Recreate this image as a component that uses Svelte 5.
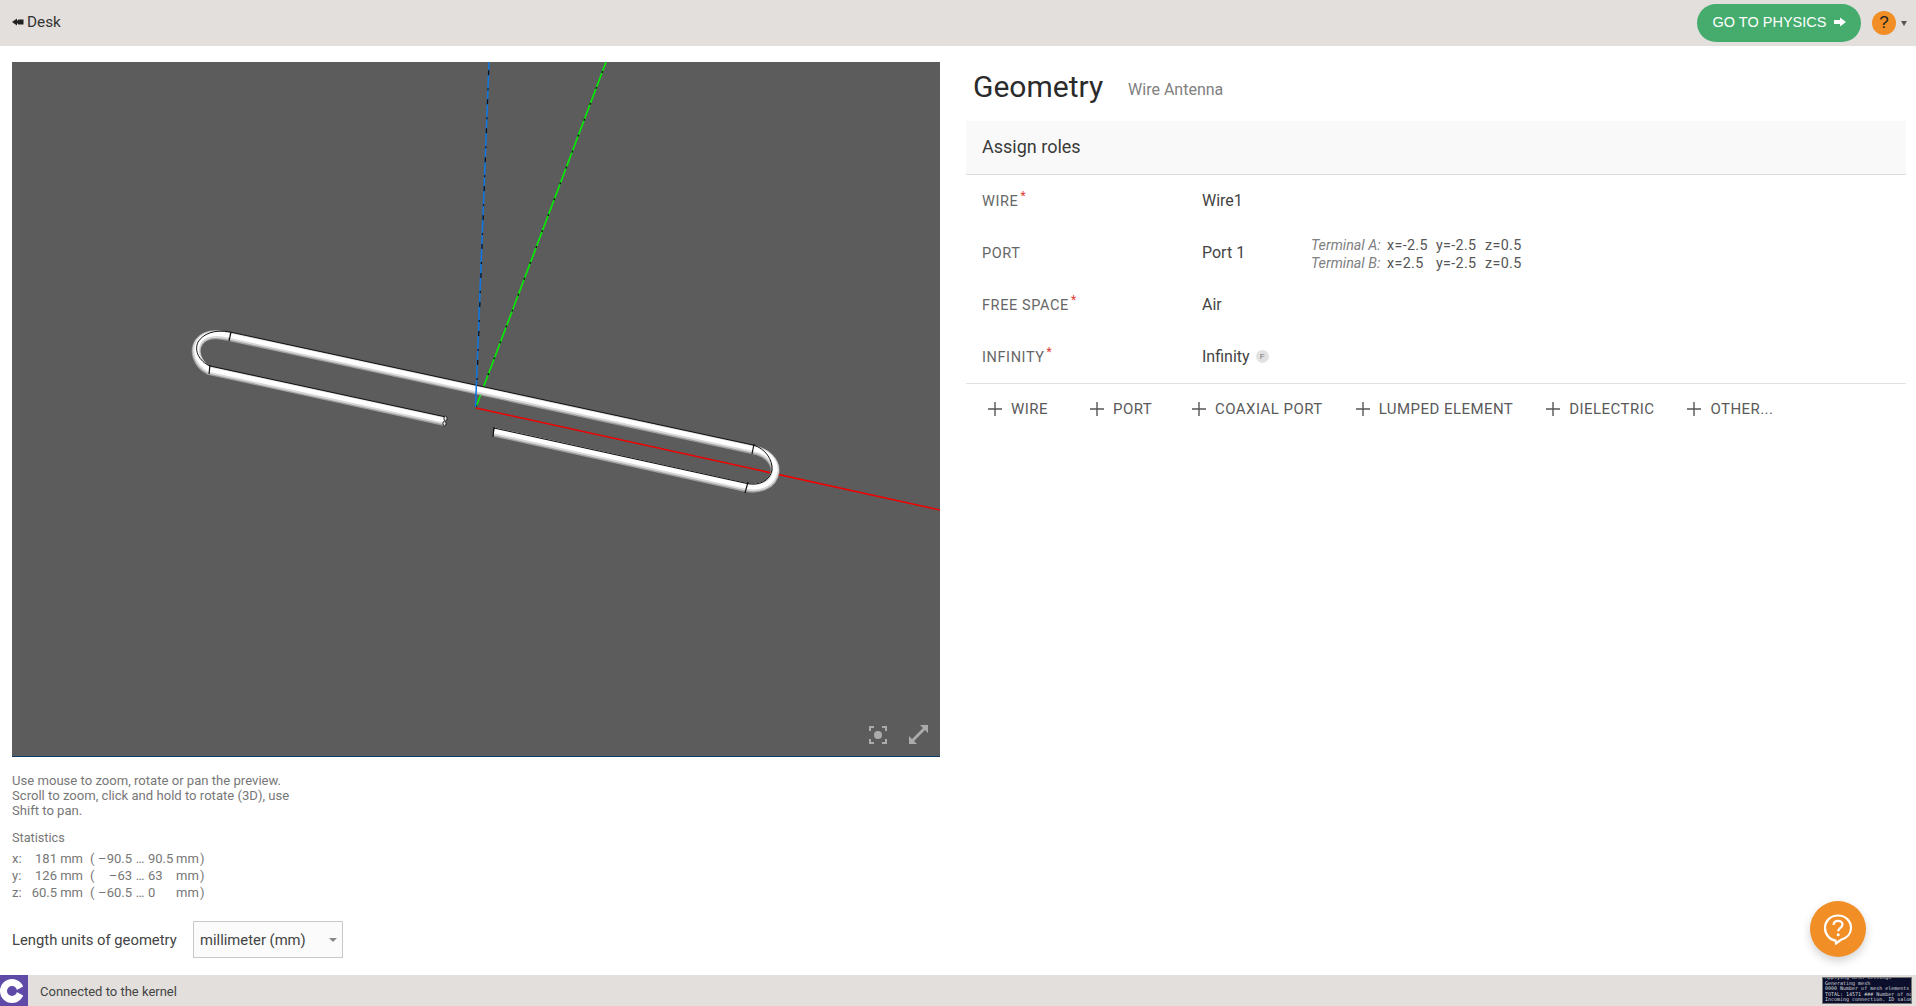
<script>
  const roles = [
    { label: "WIRE", required: true, value: "Wire1" },
    { label: "PORT", value: "Port 1", terminals: true },
    { label: "FREE SPACE", required: true, value: "Air" },
    { label: "INFINITY", required: true, value: "Infinity", badge: "F" }
  ];
  const terminals = [
    ["Terminal A:", "x=-2.5", "y=-2.5", "z=0.5"],
    ["Terminal B:", "x=2.5", "y=-2.5", "z=0.5"]
  ];
  const actions = ["WIRE", "PORT", "COAXIAL PORT", "LUMPED ELEMENT", "DIELECTRIC", "OTHER..."];
  const stats = [
    ["x:", "181 mm", "(", "–90.5", "…", "90.5", "mm", ")"],
    ["y:", "126 mm", "(", "–63", "…", "63", "mm", ")"],
    ["z:", "60.5 mm", "(", "–60.5", "…", "0", "mm", ")"]
  ];
  const logLines = [
    "Applying mesh settings",
    "Generating mesh",
    "0000 Number of mesh elements",
    "TOTAL: 14571 ### Number of no",
    "Incoming connection. ID salom"
  ];

  // wire centre lines, in page coordinates (the svg viewBox starts at 12,62)
  const tubes = [
    "M229 336.5 C216 333.5 205 334 199 342 C193 351 197 364 209 370.5 L445 421.5",
    "M494 432 L746 487.5 C760 490 773 485 775 472 C776 462 767 452 752 449.5 L229 336.5"
  ];
  const edges = [
    "M230 332 L753 445",
    "M230 332 C214 329 203 334 198 342 C194 351 199 361 210 366 L446 417",
    "M494 428 L747 483.5 C759 486 770 481 772 470 C773 460 765 448 753 445"
  ];
  const cuts = [
    [231, 332, 229, 341], [210, 365, 209, 374], [754, 444, 752, 454], [748, 482, 745, 493], [494, 427, 493, 437]
  ];
</script>

<div class="page">
  <header class="topbar">
    <a class="back" href="#desk">
      <svg width="12" height="8" viewBox="0 0 12 8"><path d="M0 4 L5 0.5 V3 L6.5 1.5 H11.5 V6.5 H6.5 L5 5 V7.5 Z" fill="#222" /></svg>
      <span>Desk</span>
    </a>
    <div class="top-actions">
      <button class="physics">
        <span>GO TO PHYSICS</span>
        <svg width="12" height="10" viewBox="0 0 12 10"><path d="M0 3 H6 V0.5 L12 5 L6 9.5 V7 H0 Z" fill="#fff" /></svg>
      </button>
      <span class="help">?</span>
      <span class="caret"></span>
    </div>
  </header>

  <main class="main">
    <section class="left">
      <div class="viewport">
        <svg class="scene" viewBox="12 62 928 694">
          <line x1="476" y1="407" x2="606" y2="62" stroke="#00f000" stroke-width="1.6" />
          <line x1="476" y1="407" x2="606" y2="62" stroke="#111" stroke-width="1.4" stroke-dasharray="2 15" />
          <line x1="476" y1="408" x2="940" y2="510" stroke="#f00000" stroke-width="1.5" />
          {#each tubes as d}
            <path {d} fill="none" stroke="#a0a0a0" stroke-width="9" />
            <path {d} fill="none" stroke="#d8d8d8" stroke-width="7.5" transform="translate(0.2 -0.6)" />
            <path {d} fill="none" stroke="#ffffff" stroke-width="4.5" transform="translate(0.3 -1)" />
          {/each}
          {#each edges as d}
            <path {d} fill="none" stroke="#111" stroke-width="1" />
          {/each}
          {#each cuts as c}
            <line x1={c[0]} y1={c[1]} x2={c[2]} y2={c[3]} stroke="#111" stroke-width="1.2" />
          {/each}
          <ellipse cx="445.5" cy="418.5" rx="1.6" ry="2.4" fill="#ddd" stroke="#111" stroke-width="0.9" />
          <ellipse cx="444.5" cy="423.5" rx="1.6" ry="2.4" fill="#ddd" stroke="#111" stroke-width="0.9" />
          <line x1="475.5" y1="407" x2="489" y2="62" stroke="#0a78e6" stroke-width="1.5" />
          <line x1="477" y1="380" x2="489" y2="62" stroke="#111" stroke-width="1.3" stroke-dasharray="2 13 5 9" />
        </svg>
        <div class="view-tools">
          <svg width="18" height="18" viewBox="0 0 18 18" fill="none" stroke="#ababab" stroke-width="2">
            <path d="M1 5 V1 H5 M13 1 H17 V5 M17 13 V17 H13 M5 17 H1 V13" />
            <circle cx="9" cy="9" r="4" fill="#ababab" stroke="none" />
          </svg>
          <svg width="19" height="19" viewBox="0 0 19 19" fill="#ababab">
            <path d="M19 0 V8 L16 5 L5 16 L8 19 H0 V11 L3 14 L14 3 L11 0 Z" />
          </svg>
        </div>
      </div>

      <p class="hint">Use mouse to zoom, rotate or pan the preview.<br />Scroll to zoom, click and hold to rotate (3D), use<br />Shift to pan.</p>

      <h4 class="stats-title">Statistics</h4>
      <div class="stats">
        {#each stats as row}
          <span class="axis">{row[0]}</span>
          <span class="size">{row[1]}</span>
          <span class="open">{row[2]}</span>
          <span class="size">{row[3]}</span>
          <span class="dots">{row[4]}</span>
          <span>{row[5]}</span>
          <span>{row[6]}</span>
          <span>{row[7]}</span>
        {/each}
      </div>

      <div class="units">
        <label for="units">Length units of geometry</label>
        <div class="select" id="units">
          <span>millimeter (mm)</span>
          <span class="select-arrow"></span>
        </div>
      </div>
    </section>

    <section class="right">
      <div class="title-row">
        <h1>Geometry</h1>
        <span class="subtitle">Wire Antenna</span>
      </div>
      <h2 class="panel-head">Assign roles</h2>
      <div class="roles">
        {#each roles as role}
          <div class="role">
            <span class="role-label">{role.label}{#if role.required}<sup>*</sup>{/if}</span>
            <span class="role-value">
              {role.value}
              {#if role.badge}<i class="badge">{role.badge}</i>{/if}
            </span>
            {#if role.terminals}
              <div class="terminals">
                {#each terminals as t}
                  <em>{t[0]}</em><span>{t[1]}</span><span>{t[2]}</span><span>{t[3]}</span>
                {/each}
              </div>
            {/if}
          </div>
        {/each}
      </div>
      <div class="add-row">
        {#each actions as action}
          <button class="add">
            <svg width="14" height="14" viewBox="0 0 14 14"><path d="M7 0 V14 M0 7 H14" stroke="#555" stroke-width="1.4" /></svg>
            {action}
          </button>
        {/each}
      </div>
    </section>
  </main>

  <button class="fab" aria-label="Help">
    <svg width="30" height="32" viewBox="0 0 30 32" fill="none" stroke="#fff" stroke-width="2.2">
      <path d="M15 2.5 C7.5 2.5 2 8 2 15 C2 22 7.5 27 12.5 27.5 L13 30.5 L18 26.8 C24 25 28 20.5 28 15 C28 8 22.5 2.5 15 2.5 Z" />
      <path d="M10.5 11.8 C10.8 9 12.8 7.8 15 7.8 C17.5 7.8 19.5 9.3 19.5 11.6 C19.5 14.8 15.2 15 15.2 18.2" />
      <circle cx="15.2" cy="21.8" r="1.5" fill="#fff" stroke="none" />
    </svg>
  </button>

  <footer class="statusbar">
    <div class="logo">
      <svg width="28" height="31" viewBox="0 0 28 31" fill="none">
        <circle cx="12" cy="16" r="8.5" stroke="#fff" stroke-width="7" />
        <path d="M15 16 L30 7.5 V24.5 Z" fill="#5f4aa8" />
      </svg>
    </div>
    <span class="status-text">Connected to the kernel</span>
    <div class="log">
      {#each logLines as line}
        <div>{line}</div>
      {/each}
    </div>
  </footer>
</div>

<style>
  :global(body) {
    margin: 0;
    background: #fff;
    font-family: Roboto, "Liberation Sans", sans-serif;
    color: #333;
  }
  .page {
    height: 100vh;
    display: flex;
    flex-direction: column;
    overflow: hidden;
    position: relative;
  }
  .topbar {
    height: 46px;
    flex: none;
    background: #e2dfdc;
    display: flex;
    align-items: center;
    justify-content: space-between;
    padding: 0 9px 0 12px;
  }
  .back {
    display: flex;
    align-items: center;
    gap: 3px;
    margin-top: -2px;
    color: #333;
    font-size: 15.3px;
    text-decoration: none;
  }
  .top-actions {
    display: flex;
    align-items: center;
  }
  .physics {
    width: 164px;
    height: 38px;
    border: 0;
    border-radius: 19px;
    background: #45ac6d;
    color: #fff;
    font-family: "Liberation Sans", Arial, sans-serif;
    font-size: 14.5px;
    display: flex;
    align-items: center;
    justify-content: center;
    gap: 8px;
    padding: 0 0 2px 1px;
  }
  .help {
    width: 24px;
    height: 24px;
    margin-left: 11px;
    border-radius: 50%;
    background: #f18e26;
    color: #222;
    font: 17px/24px "Liberation Sans", sans-serif;
    text-align: center;
  }
  .caret {
    margin-left: 5px;
    border-left: 3px solid transparent;
    border-right: 3px solid transparent;
    border-top: 5px solid #555;
  }
  .main {
    flex: 1;
    display: flex;
    min-height: 0;
  }
  .left {
    width: 928px;
    padding: 16px 0 0 12px;
    font-size: 12.7px;
    color: #777;
  }
  .viewport {
    height: 694px;
    background: #5c5c5c;
    border-bottom: 1px solid #0a3a6a;
    box-sizing: content-box;
    position: relative;
    margin-bottom: 16px;
  }
  .scene {
    display: block;
    width: 100%;
    height: 100%;
  }
  .view-tools {
    position: absolute;
    right: 12px;
    bottom: 12px;
    display: flex;
    align-items: center;
    gap: 22px;
  }
  .hint {
    margin: 0;
    font-size: 13.1px;
    line-height: 15px;
    width: 310px;
  }
  .stats-title {
    margin: 12px 0 5px;
    font-weight: 400;
    font-size: 12.7px;
    line-height: 15px;
  }
  .stats {
    display: grid;
    grid-template-columns: 18px 53px 12px 37px 16px 28px 24px auto;
    justify-content: start;
    line-height: 17px;
    font-size: 13px;
  }
  .size {
    text-align: right;
  }
  .open {
    padding-left: 7px;
  }
  .dots {
    text-align: center;
  }
  .units {
    display: flex;
    align-items: center;
    margin-top: 20px;
    color: #444;
    font-size: 14.8px;
  }
  .units label {
    width: 181px;
  }
  .select {
    width: 150px;
    height: 37px;
    border: 1px solid #c8c8c8;
    background: #fbfbfb;
    display: flex;
    align-items: center;
    justify-content: space-between;
    padding: 0 5px 0 6px;
    box-sizing: border-box;
  }
  .select-arrow {
    border-left: 4px solid transparent;
    border-right: 4px solid transparent;
    border-top: 4px solid #888;
  }
  .right {
    width: 940px;
    margin-left: 26px;
    padding-top: 16px;
  }
  .title-row {
    height: 59px;
    box-sizing: border-box;
    padding: 7px 0 0 7px;
    display: flex;
    align-items: flex-start;
    gap: 25px;
  }
  h1 {
    margin: 0;
    font-size: 30px;
    font-weight: 400;
    color: #2b2b2b;
  }
  .subtitle {
    margin-top: 11px;
    font-size: 16px;
    color: #808080;
  }
  .panel-head {
    margin: 0;
    height: 54px;
    box-sizing: border-box;
    padding-left: 16px;
    background: #f9f9f9;
    border-bottom: 1px solid #ddd;
    font-size: 18px;
    font-weight: 400;
    line-height: 52px;
    color: #3a3a3a;
  }
  .roles {
    border-bottom: 1px solid #e0e0e0;
  }
  .role {
    height: 52px;
    display: flex;
    align-items: center;
    padding-left: 16px;
  }
  .role-label {
    width: 220px;
    font-size: 14.5px;
    letter-spacing: 0.6px;
    color: #666;
  }
  sup {
    color: #e53935;
    font-size: 12px;
    line-height: 0;
    margin-left: 2px;
  }
  .role-value {
    width: 109px;
    padding-bottom: 2px;
    font-size: 16px;
    color: #444;
    display: flex;
    align-items: center;
    gap: 6px;
  }
  .badge {
    width: 13px;
    height: 13px;
    border-radius: 50%;
    background: #e2e2e2;
    color: #777;
    font: 8px/13px "Liberation Sans", sans-serif;
    text-align: center;
  }
  .terminals {
    display: grid;
    grid-template-columns: 76px 49px 49px auto;
    padding-top: 2px;
    font-size: 14.3px;
    line-height: 18px;
    letter-spacing: 0.35px;
    color: #555;
  }
  .terminals em {
    color: #808080;
    letter-spacing: 0;
  }
  .add-row {
    display: flex;
    align-items: center;
    height: 51px;
    padding: 0 0 1px 22px;
    box-sizing: border-box;
    gap: 33px;
  }
  .add {
    min-width: 69px;
    border: 0;
    padding: 0;
    background: none;
    display: flex;
    align-items: center;
    gap: 9px;
    font-family: Roboto, sans-serif;
    font-size: 15px;
    letter-spacing: 0.45px;
    color: #5a5a5a;
  }
  .fab {
    position: absolute;
    left: 1810px;
    top: 901px;
    width: 56px;
    height: 56px;
    border: 0;
    border-radius: 50%;
    padding: 0;
    background: #f18e26;
    box-shadow: 0 4px 10px rgba(0, 0, 0, 0.18);
    display: flex;
    align-items: center;
    justify-content: center;
  }
  .statusbar {
    height: 31px;
    flex: none;
    background: #e2dfdc;
    display: flex;
    align-items: center;
  }
  .logo {
    width: 28px;
    height: 31px;
    background: #5f4aa8;
    overflow: hidden;
  }
  .logo svg {
    display: block;
  }
  .status-text {
    margin: 2px 0 0 12px;
    font-size: 13px;
    color: #444;
  }
  .log {
    margin-left: auto;
    margin-right: 4px;
    width: 90px;
    height: 27px;
    box-sizing: border-box;
    overflow: hidden;
    background: #0b0f2c;
    border: 1px solid #777;
    color: #d8d8d8;
    font: 5px/5.6px "DejaVu Sans Mono", monospace;
    white-space: nowrap;
    display: flex;
    flex-direction: column;
    justify-content: flex-end;
    padding-left: 2px;
  }
</style>
